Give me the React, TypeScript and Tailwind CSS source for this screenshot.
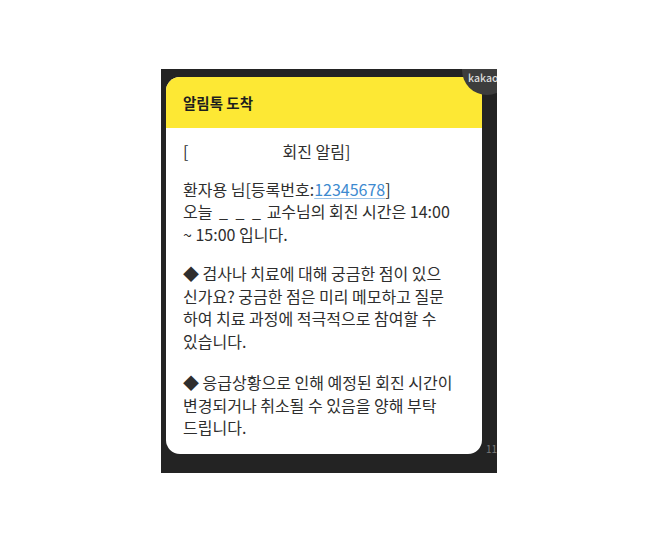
import React from "react";

const font = { fontFamily: '"Noto Sans CJK KR", "Noto Sans", sans-serif' };

export default function App() {
  return (
    <div className="w-[646px] h-[543px] bg-white flex items-start" style={font}>
      <div className="relative ml-[161px] mt-[69px] w-[336px] h-[404px] bg-[#232323] overflow-hidden">
        <div className="ml-[5px] mt-[8px] w-[316px] h-[377px] rounded-[14px] bg-white overflow-hidden flex flex-col">
          <div className="h-[51px] bg-[#fde834] flex items-center pl-[17px]">
            <span className="text-[14.5px] font-bold text-[#1e1e1e]">알림톡 도착</span>
          </div>
          <div className="pl-[17px] pt-[12px] text-[16px] leading-[22.5px] text-[#2e2e2e] whitespace-nowrap">
            <div className="flex">
              <span>[</span>
              <span className="ml-[94px]">회진 알림]</span>
            </div>
            <div className="mt-[15px]">
              환자용 님[등록번호:<span className="text-[#3d8ad0] underline decoration-[#9cc3e6] underline-offset-2">12345678</span>]
            </div>
            <div>오늘 <span className="ml-[3px] tracking-[2px]">_ _ _</span> 교수님의 회진 시간은 14:00</div>
            <div>~ 15:00 입니다.</div>
            <div className="mt-[17px]">◆ 검사나 치료에 대해 궁금한 점이 있으</div>
            <div>신가요? 궁금한 점은 미리 메모하고 질문</div>
            <div>하여 치료 과정에 적극적으로 참여할 수</div>
            <div>있습니다.</div>
            <div className="mt-[19px]">◆ 응급상황으로 인해 예정된 회진 시간이</div>
            <div>변경되거나 취소될 수 있음을 양해 부탁</div>
            <div>드립니다.</div>
          </div>
        </div>
        <div className="absolute left-[301px] top-[-24px] w-[50px] h-[50px] rounded-full bg-[#3d3d3d]" />
        <span className="absolute left-[307px] top-[1px] text-[10.5px] text-[#dcdcdc] font-medium">kakao</span>
        <span className="absolute left-[325px] top-[372px] text-[10px] text-[#7a7a7a]">11</span>
      </div>
    </div>
  );
}
